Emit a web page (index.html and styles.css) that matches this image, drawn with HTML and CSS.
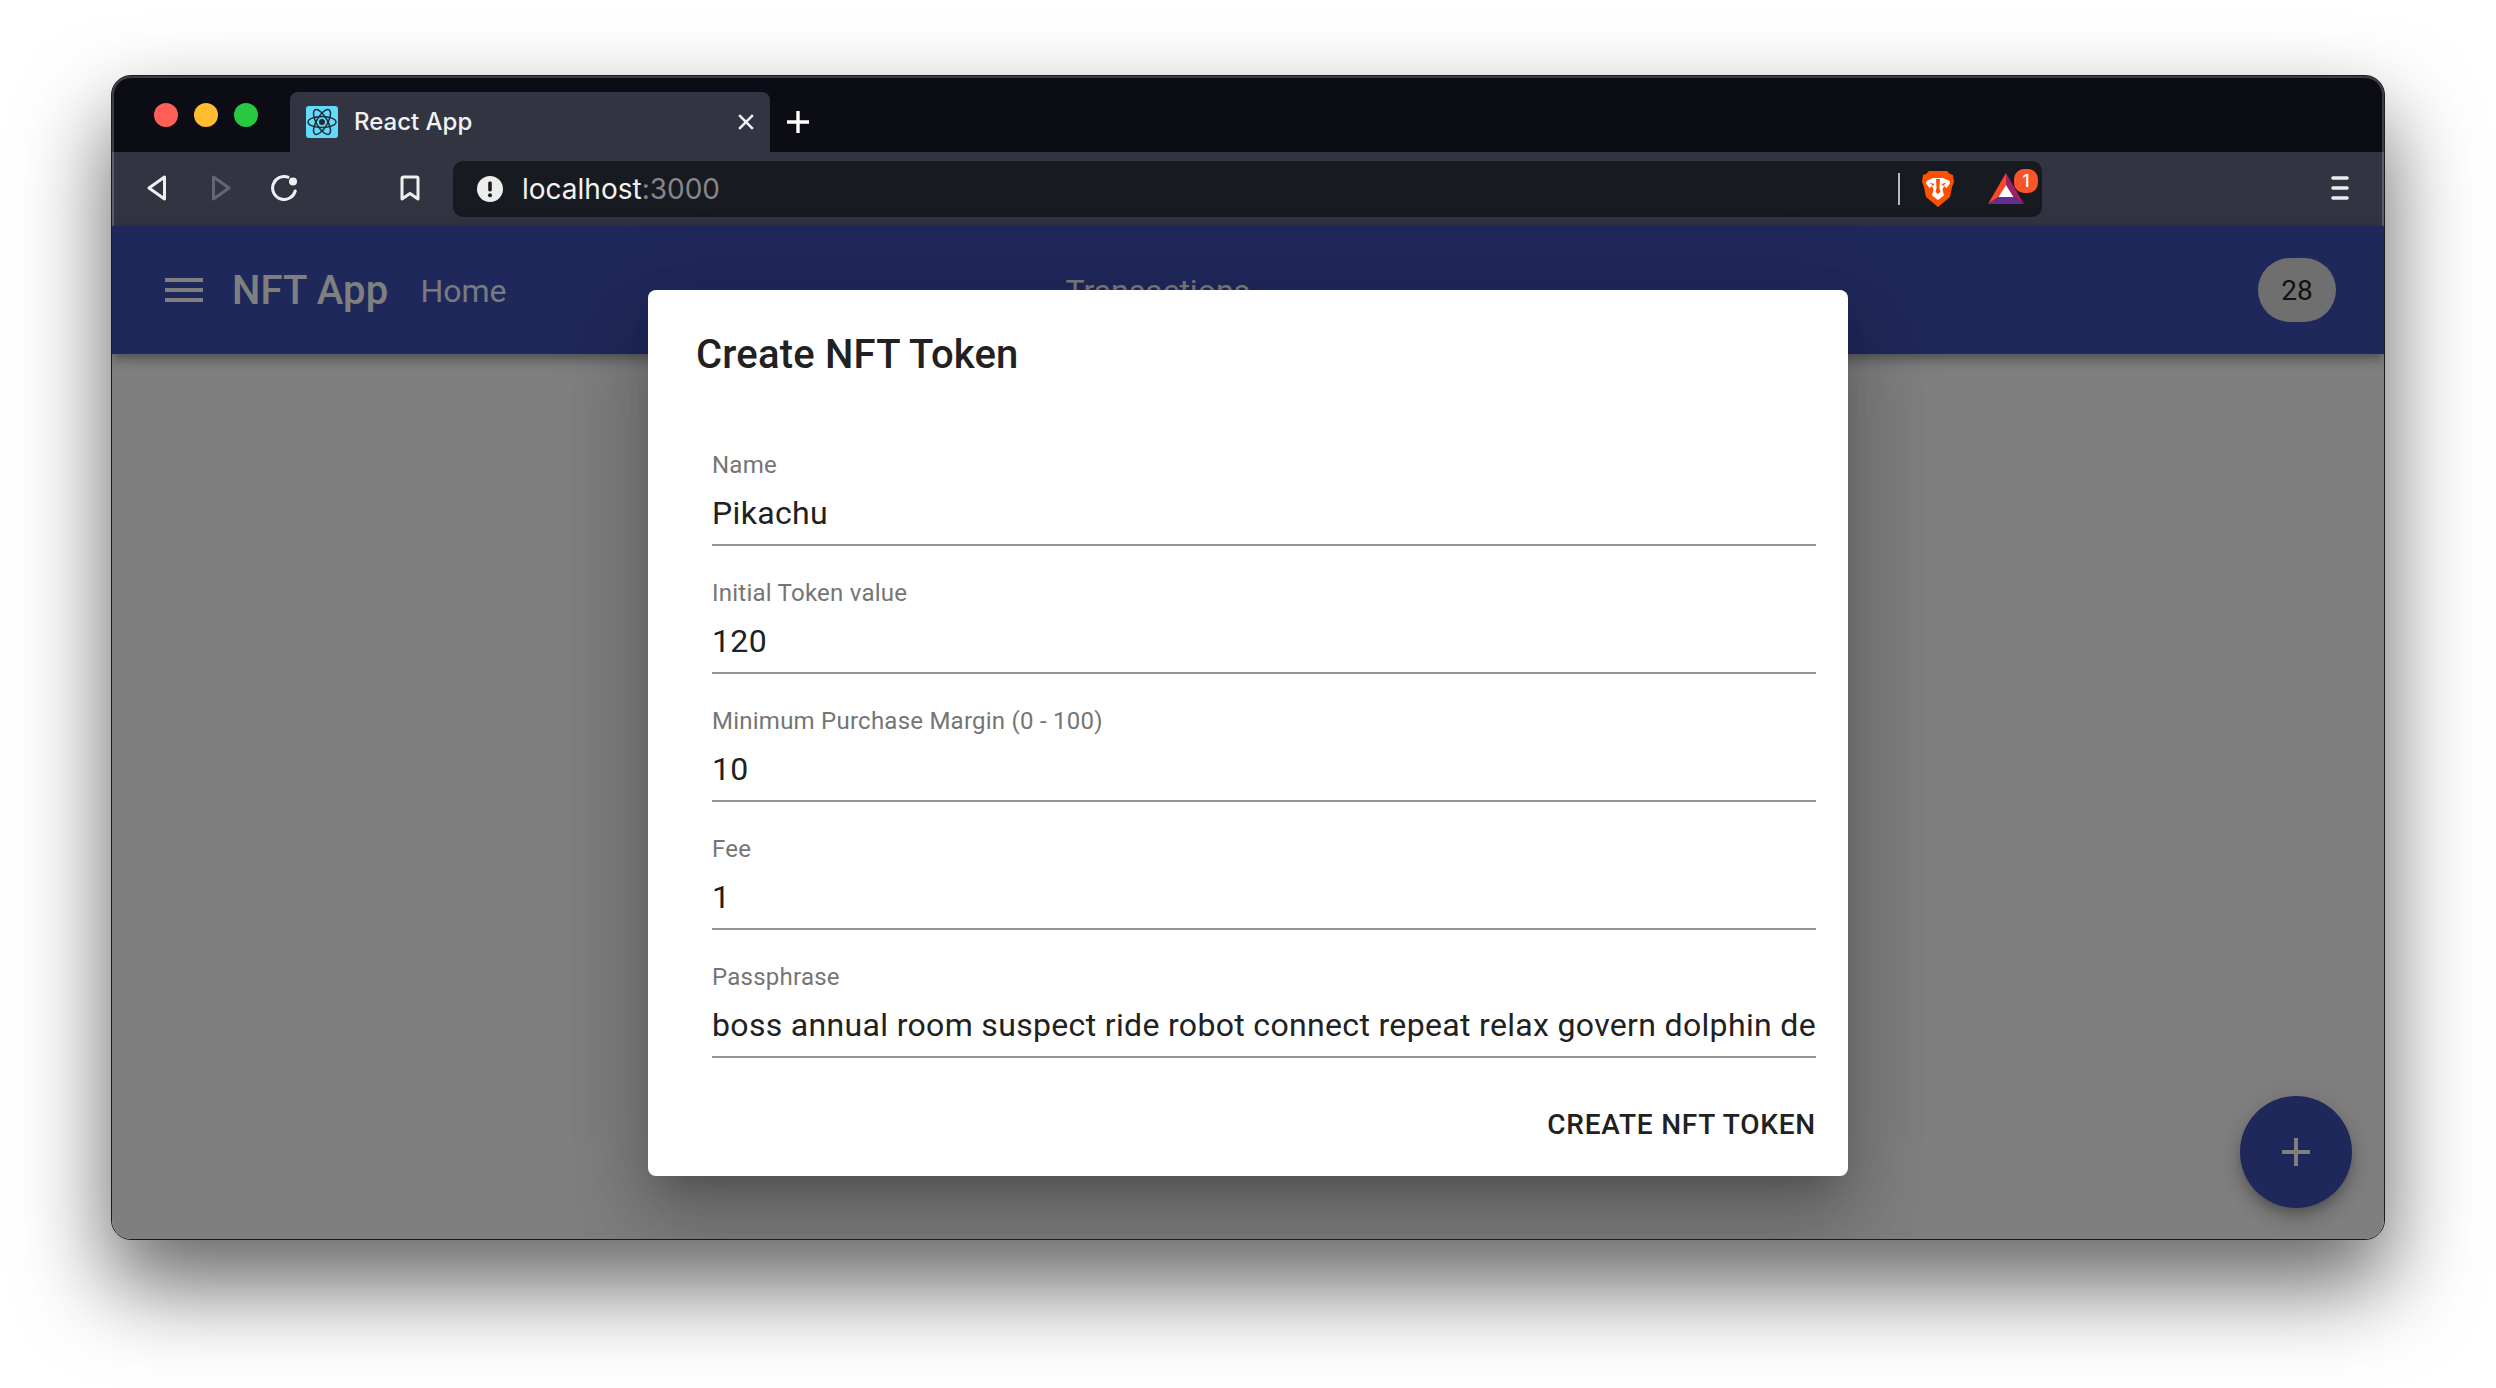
FILE: index.html
```html
<!DOCTYPE html>
<html lang="en">
<head>
<meta charset="utf-8">
<title>React App</title>
<link rel="stylesheet" href="styles.css">
</head>
<body>
<div class="window">
  <div class="tabstrip">
    <div class="lights">
      <span class="light red"></span><span class="light yellow"></span><span class="light green"></span>
    </div>
    <div class="tab">
      <svg class="favicon" viewBox="0 0 32 32"><rect width="32" height="32" rx="3" fill="#61dafb"/><g fill="none" stroke="#1f2a33" stroke-width="1.5"><ellipse cx="16" cy="16" rx="14" ry="5.5"/><ellipse cx="16" cy="16" rx="14" ry="5.5" transform="rotate(60 16 16)"/><ellipse cx="16" cy="16" rx="14" ry="5.5" transform="rotate(120 16 16)"/></g><circle cx="16" cy="16" r="3" fill="#1f2a33"/></svg>
      <span class="tab-title">React App</span>
      <svg class="tab-close" viewBox="0 0 14 14"><path d="M1 1l12 12M13 1L1 13" stroke="#f2f2f2" stroke-width="2.2" fill="none"/></svg>
    </div>
    <svg class="newtab" viewBox="0 0 22 22"><path d="M11 0v22M0 11h22" stroke="#fff" stroke-width="3.4" fill="none"/></svg>
  </div>

  <div class="toolbar">
    <svg class="tool back" viewBox="0 0 20 26"><path d="M17.5 2L2 13l15.500 11z" fill="none" stroke="#f0f0f0" stroke-width="3" stroke-linejoin="round"/></svg>
    <svg class="tool forward" viewBox="0 0 20 26"><path d="M2.500 2L18 13 2.500 24z" fill="none" stroke="#646672" stroke-width="3" stroke-linejoin="round"/></svg>
    <svg class="tool reload" viewBox="0 0 28 26"><path d="M17 2.200A11.500 11.500 0 1 0 24.200 16" fill="none" stroke="#f0f0f0" stroke-width="3" stroke-linecap="round"/><circle cx="22" cy="6.500" r="4" fill="#f0f0f0"/></svg>
    <svg class="tool bookmark" viewBox="0 0 20 26"><path d="M2 3.500a1.500 1.500 0 0 1 1.500-1.500h13a1.500 1.500 0 0 1 1.500 1.500V24l-8-5.500L2 24z" fill="none" stroke="#f0f0f0" stroke-width="3" stroke-linejoin="round"/></svg>
    <div class="urlbar">
      <svg class="url-info" viewBox="0 0 26 26"><circle cx="13" cy="13" r="13" fill="#ededed"/><rect x="11.200" y="5.500" width="3.600" height="10" rx="1.400" fill="#181a21"/><circle cx="13" cy="19.300" r="2" fill="#181a21"/></svg>
      <span class="url-text">localhost<span class="url-port">:3000</span></span>
      <span class="url-sep"></span>
      <svg class="lion" viewBox="0 0 32 36"><path d="M7 0h18l3 3 3 1 1 7-2 5-2 10-12 10L4 26 2 16l-2-5 1-7 3-1z" fill="#ff5000"/><path d="M4.500 10L11 7h10l6.500 3 .5 2.500-3.500 4.500-2.500-2-1.500 3.500L22 24.500 16 29l-6-4.500 1.500-6L10 15l-2.500 2L4 12.500z" fill="#fff"/><path d="M14 8h4l-.5 9 1 4-2.500 2-2.500-2 1-4zM7.500 11.500l5 1.500-1.500 2zM24.500 11.500l-5 1.500 1.500 2z" fill="#ff5000"/></svg>
      <div class="bat">
        <svg class="bat-icon" viewBox="0 0 36 31"><path d="M18 0L0 31l10.500-7L18 12z" fill="#ff4724"/><path d="M18 0l18 31-10.500-7L18 12z" fill="#9e1f63"/><path d="M0 31h36l-10.500-7h-15z" fill="#662d91"/><path d="M18 12l7.500 12h-15z" fill="#fff"/></svg>
        <span class="bat-badge">1</span>
      </div>
    </div>
    <svg class="tool chrome-menu" viewBox="0 0 18 26"><path d="M2 3h14M2 13h14M2 23h14" stroke="#eee" stroke-width="3.600" stroke-linecap="round" fill="none"/></svg>
  </div>

  <div class="page">
    <header class="appbar">
      <svg class="app-menu" viewBox="0 0 38 24"><path d="M0 2h38M0 12h38M0 22h38" stroke="#fff" stroke-width="4" fill="none"/></svg>
      <span class="brand">NFT App</span>
      <a class="nav nav-home">Home</a>
      <a class="nav nav-tx">Transactions</a>
      <div class="avatar">28</div>
    </header>
    <main class="content"></main>
    <button class="fab" type="button"><svg viewBox="0 0 28 28"><path d="M14 0v28M0 14h28" stroke="#fff" stroke-width="4" fill="none"/></svg></button>

    <div class="backdrop">
      <section class="dialog">
        <h2 class="dialog-title">Create NFT Token</h2>
        <form class="dialog-form">
          <div class="field"><span class="field-label">Name</span><div class="field-value">Pikachu</div></div>
          <div class="field"><span class="field-label">Initial Token value</span><div class="field-value">120</div></div>
          <div class="field"><span class="field-label">Minimum Purchase Margin (0 - 100)</span><div class="field-value">10</div></div>
          <div class="field"><span class="field-label">Fee</span><div class="field-value">1</div></div>
          <div class="field"><span class="field-label">Passphrase</span><div class="field-value">boss annual room suspect ride robot connect repeat relax govern dolphin depart</div></div>
        </form>
        <div class="dialog-actions"><span class="action">Create NFT Token</span></div>
      </section>
    </div>
  </div>
  <div class="window-edge"></div>
</div>
</body>
</html>
```
FILE: styles.css
```css
* { box-sizing: border-box; }
html, body { margin: 0; padding: 0; background: #fff; }
body { width: 2496px; height: 1388px; overflow: hidden; padding: 75px 111px 148px; }

.window {
  position: relative;
  width: 2274px;
  height: 1165px;
  border: 1px solid #1c1c1c;
  border-radius: 20px;
  overflow: hidden;
  display: flex;
  flex-direction: column;
  background: #808080;
  box-shadow: 0 44px 88px 2px rgba(0, 0, 0, .6);
}
.window-edge {
  position: absolute;
  inset: 0;
  border-radius: 19px;
  box-shadow: inset 0 0 0 2px rgba(255, 255, 255, .2);
  pointer-events: none;
}

/* Tab strip */
.tabstrip {
  flex: none;
  height: 76px;
  padding: 16px 0 0 42px;
  display: flex;
  align-items: flex-start;
  background: #0c0c15;
}
.lights { display: flex; gap: 16px; margin-top: 11px; margin-right: 32px; }
.light { width: 24px; height: 24px; border-radius: 50%; }
.red { background: #ff5f57; }
.yellow { background: #febc2e; }
.green { background: #28c840; }
.tab {
  width: 480px;
  height: 60px;
  padding: 0 16px 0 16px;
  display: flex;
  align-items: center;
  border-radius: 8px 8px 0 0;
  background: #323541;
}
.favicon { width: 32px; height: 32px; margin-right: 16px; }
.tab-title { font: 500 24px/32px Inter, sans-serif; color: #f2f2f2; }
.tab-close { width: 16px; height: 16px; margin-left: auto; }
.newtab { width: 22px; height: 22px; margin: 19px 0 0 17px; }

/* Toolbar */
.toolbar {
  flex: none;
  height: 74px;
  padding: 0 35px;
  display: flex;
  align-items: center;
  background: #323541;
}
.tool { height: 26px; flex: none; margin-top: -2px; }
.back { width: 20px; }
.forward { width: 20px; margin-left: 44px; }
.reload { width: 28px; margin-left: 40px; }
.bookmark { width: 20px; margin-left: 101px; }
.urlbar {
  width: 1589px;
  height: 56px;
  margin-left: 33px;
  padding: 0 18px 0 23px;
  display: flex;
  align-items: center;
  border-radius: 10px;
  background: #181a21;
}
.url-info { width: 26px; height: 26px; margin-right: 20px; margin-left: 1px; }
.url-text { font: 400 28px/36px Inter, sans-serif; color: #f2f2f2; margin-left: -1px; margin-top: -1px; }
.url-port { color: #85868c; }
.url-sep { width: 2px; height: 32px; margin-left: auto; background: #b9b9b9; }
.lion { width: 32px; height: 36px; margin-left: 22px; }
.bat { position: relative; width: 36px; height: 31px; margin-left: 34px; margin-top: -2px; }
.bat-icon { display: block; width: 36px; height: 31px; }
.bat-badge {
  position: absolute;
  top: -4px;
  left: 26px;
  width: 24px;
  height: 24px;
  border-radius: 10px;
  background: #fb542b;
  color: #fff;
  font: 500 17px/24px Inter, sans-serif;
  text-align: center;
}
.chrome-menu { width: 18px; margin-left: auto; }

/* Page */
.page {
  position: relative;
  flex: 1;
  min-height: 0;
  display: flex;
  flex-direction: column;
  font-family: Roboto, sans-serif;
}
.appbar {
  position: relative;
  z-index: 1;
  flex: none;
  height: 128px;
  padding: 0 48px 0 53px;
  display: flex;
  align-items: center;
  color: #fff;
  background: #3f51b5;
  box-shadow: 0 4px 8px -2px rgba(0, 0, 0, .2), 0 8px 10px 0 rgba(0, 0, 0, .14), 0 2px 20px 0 rgba(0, 0, 0, .12);
}
.app-menu { width: 38px; height: 24px; flex: none; margin-right: 29px; }
.brand { font-size: 40px; font-weight: 500; line-height: 60px; letter-spacing: .15px; padding-top: 2px; }
.nav { font-size: 32px; line-height: 48px; color: rgba(255, 255, 255, .95); padding-top: 2px; }
.nav-home { margin-left: 32px; }
.nav-tx { margin-left: 559px; }
.avatar {
  width: 78px;
  height: 64px;
  margin-left: auto;
  border-radius: 32px / 32px;
  background: #dedede;
  color: #222;
  font-size: 28px;
  line-height: 66px;
  text-align: center;
}
.content { flex: 1; background: #fff; }
.fab {
  position: absolute;
  right: 32px;
  bottom: 31px;
  width: 112px;
  height: 112px;
  padding: 0;
  border: 0;
  border-radius: 50%;
  display: flex;
  align-items: center;
  justify-content: center;
  background: #3f51b5;
  box-shadow: 0 6px 10px -2px rgba(0, 0, 0, .2), 0 12px 20px 0 rgba(0, 0, 0, .14), 0 2px 36px 0 rgba(0, 0, 0, .12);
}
.fab svg { width: 28px; height: 28px; }

/* Dialog */
.backdrop {
  position: absolute;
  inset: 0;
  z-index: 2;
  display: flex;
  align-items: center;
  justify-content: center;
  background: rgba(0, 0, 0, .5);
}
.dialog {
  width: 1200px;
  height: 886px;
  border-radius: 8px;
  background: #fff;
  color: #212121;
  box-shadow: 0 22px 30px -14px rgba(0, 0, 0, .2), 0 48px 76px 6px rgba(0, 0, 0, .14), 0 18px 92px 16px rgba(0, 0, 0, .12);
}
.dialog-title {
  margin: 0;
  padding: 34px 48px 0;
  font-size: 40px;
  font-weight: 500;
  line-height: 62px;
  letter-spacing: .2px;
}
.dialog-form { padding: 32px 32px 0 64px; }
.field { height: 128px; padding-top: 33px; border-bottom: 2px solid #949494; }
.field-label {
  display: block;
  font-size: 24px;
  line-height: 28px;
  letter-spacing: .24px;
  color: #757575;
}
.field-value {
  margin-top: 16px;
  font-size: 32px;
  line-height: 36px;
  letter-spacing: .33px;
  white-space: nowrap;
  overflow: hidden;
}
.dialog-actions { padding: 49px 32px 0; display: flex; justify-content: flex-end; }
.action {
  font-size: 28px;
  font-weight: 500;
  line-height: 36px;
  letter-spacing: .8px;
  text-transform: uppercase;
}
```
